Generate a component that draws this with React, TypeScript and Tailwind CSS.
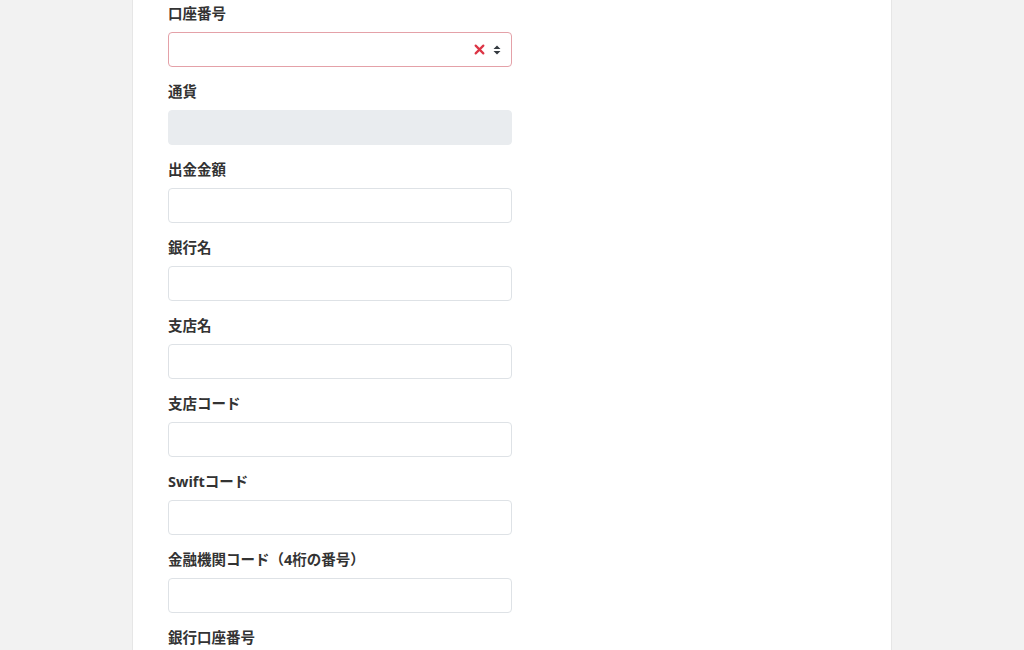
import React from "react";

const labels = [
  "通貨",
  "出金金額",
  "銀行名",
  "支店名",
  "支店コード",
  "Swiftコード",
  "金融機関コード（4桁の番号）",
];

function Label({ children }: { children: React.ReactNode }) {
  return (
    <div className="text-[14.5px] leading-[21px] font-bold text-[#333333] mb-[8px]">
      {children}
    </div>
  );
}

export default function App() {
  return (
    <div
      className="w-[1024px] h-[650px] overflow-hidden bg-[#f2f2f2] flex justify-center"
      style={{ fontFamily: '"Open Sans", "Noto Sans CJK JP", sans-serif' }}
    >
      <div className="w-[760px] h-full bg-white border-x border-[#e6e6e6] pl-[35px] pt-[3px]">
        <div className="w-[344px] flex flex-col">
          <div className="mb-[14px]">
            <Label>口座番号</Label>
            <div className="h-[35px] rounded-[4px] border border-[#e4a1a8] bg-white flex items-center justify-end pr-[10px] gap-[8px]">
              <svg width="11" height="11" viewBox="0 0 10 10">
                <path d="M1.5 1.5 L8.5 8.5 M8.5 1.5 L1.5 8.5" stroke="#dc3545" strokeWidth="2" strokeLinecap="round" />
              </svg>
              <svg width="8" height="10" viewBox="0 0 8 10">
                <path d="M4 0.5 L7.5 4 L0.5 4 Z M4 9.5 L7.5 6 L0.5 6 Z" fill="#343a40" />
              </svg>
            </div>
          </div>
          {labels.map((l, i) => (
            <div key={l} className="mb-[14px]">
              <Label>{l}</Label>
              <div
                className={
                  i === 0
                    ? "h-[35px] rounded-[4px] border border-[#e9ecef] bg-[#e9ecef]"
                    : "h-[35px] rounded-[4px] border border-[#dee2e6] bg-white"
                }
              />
            </div>
          ))}
          <div>
            <Label>銀行口座番号</Label>
            <div className="h-[35px] rounded-[4px] border border-[#dee2e6] bg-white" />
          </div>
        </div>
      </div>
    </div>
  );
}
